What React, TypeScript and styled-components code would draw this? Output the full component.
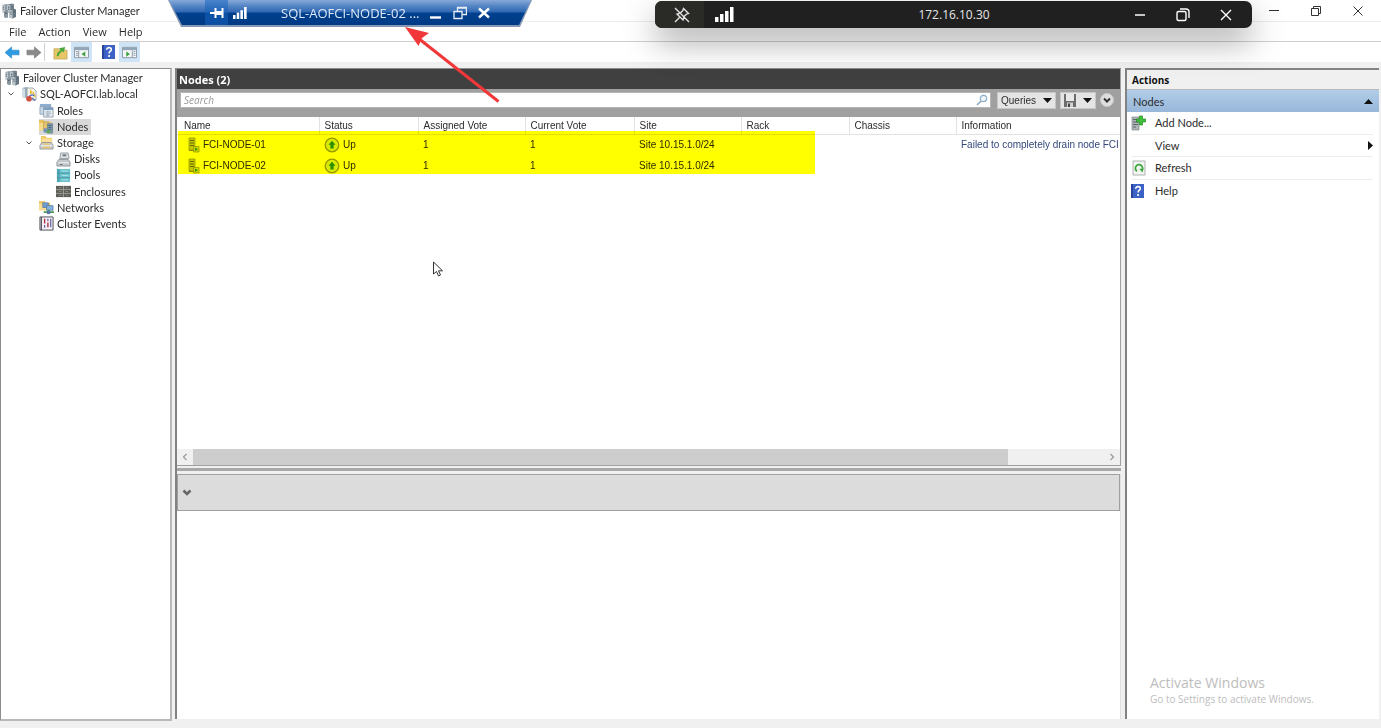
import React from "react";
import styled, { createGlobalStyle, css } from "styled-components";

const ui = `"Open Sans", "Noto Sans", sans-serif`;
const compact = `Lato, "Open Sans", sans-serif`;
const grid = `"Liberation Sans", Arial, sans-serif`;

const GlobalStyle = createGlobalStyle`
  * { box-sizing: border-box; }
  body { margin: 0; background: #f0f0f0; font-family: ${ui}; font-size: 11px; color: #2b2b2b; }
  button { font: inherit; color: inherit; background: none; border: 0; padding: 0; margin: 0; text-align: left; }
  svg { display: block; flex: none; }
`;

const Window = styled.div`
  display: flex;
  flex-direction: column;
  height: 100vh;
  min-width: 960px;
  overflow: hidden;
  position: relative;
`;

const TitleBar = styled.header`
  display: flex;
  align-items: center;
  height: 22px;
  padding: 0 17px 0 1px;
  background: #fff;
  border-bottom: 1px solid #ececec;
`;
const Title = styled.h1`
  flex: 1;
  margin: 0 0 0 3px;
  font: 400 11px/16px ${compact};
`;
const WindowButtons = styled.div`
  display: flex;
  gap: 30px;
`;

const MenuBar = styled.nav`
  display: flex;
  align-items: center;
  gap: 12px;
  height: 20px;
  padding-left: 9px;
  background: #fff;
  border-bottom: 1px solid #cfcfcf;
`;
const MenuItem = styled.button`
  line-height: 16px;
`;

const ToolBar = styled.div`
  display: flex;
  align-items: center;
  height: 20px;
  padding-left: 2px;
  background: #fff;
`;
const ToolButton = styled.button<{ $on?: boolean }>`
  display: flex;
  align-items: center;
  justify-content: center;
  width: 21px;
  height: 20px;
  background: ${(p) => (p.$on ? "#cfe4f7" : "transparent")};
`;
const ToolDivider = styled.span`
  width: 1px;
  height: 18px;
  margin-right: 5px;
  background: #d0d0d0;
`;
const ToolGap = styled.span`
  width: 6px;
`;

const Body = styled.main`
  display: flex;
  flex: 1;
  min-height: 0;
  padding: 6px 2px 0 0;
`;

const TreePane = styled.nav`
  width: 172px;
  border: 1px solid #8c8c8c;
  border-right: 2px solid #b8b8b8;
  border-bottom: 2px solid #b8b8b8;
  background: #fff;
`;
const Tree = styled.ul`
  display: flex;
  flex-direction: column;
  height: 162px;
  margin: 1px 0 0;
  padding: 0;
  list-style: none;
  font-family: ${compact};
`;
const TreeRow = styled.li<{ $level: number }>`
  display: flex;
  flex: 1;
  align-items: center;
  padding-left: ${(p) => [3, 6, 24, 24, 41][p.$level]}px;
`;
const Twisty = styled.span`
  display: flex;
  width: 14px;
`;
const TreeLabel = styled.button<{ $selected?: boolean }>`
  display: flex;
  align-items: center;
  gap: 3px;
  height: 16px;
  padding-right: 3px;
  white-space: nowrap;
  line-height: 16px;
  background: ${(p) => (p.$selected ? "#d9d9d9" : "transparent")};
`;

const Center = styled.section`
  display: flex;
  flex: 1;
  flex-direction: column;
  min-width: 0;
  margin: 0 4px 2px 3px;
  border-left: 2px solid #828282;
  border-top: 1px solid #8c8c8c;
`;
const NodesPanel = styled.section`
  display: flex;
  flex: 396 1 0;
  flex-direction: column;
  min-height: 0;
  background: #fff;
  border-right: 1px solid #a0a0a0;
  border-bottom: 1px solid #a0a0a0;
`;
const PanelTitle = styled.h2`
  margin: 0;
  padding: 2px 2px 0;
  height: 20px;
  background: #404040;
  color: #fff;
  font-size: 11px;
  line-height: 18px;
`;
const SearchStrip = styled.form`
  display: flex;
  align-items: flex-start;
  gap: 4px;
  height: 28px;
  padding: 3px 6px 0 3px;
  background: #a0a0a0;
`;
const SearchBox = styled.label`
  display: flex;
  flex: 1;
  align-items: center;
  height: 16px;
  margin-right: 2px;
  padding-right: 2px;
  background: #fff;
  border: 1px solid #b5b5b5;
`;
const SearchInput = styled.input`
  flex: 1;
  min-width: 0;
  height: 14px;
  padding: 0 3px;
  border: 0;
  outline: 0;
  background: transparent;
  font: italic 10px/14px ${ui};
  &::placeholder { color: #9a9a9a; opacity: 1; }
`;
const StripButton = styled.button<{ $width: number }>`
  display: flex;
  align-items: center;
  justify-content: space-between;
  width: ${(p) => p.$width}px;
  height: 17px;
  padding: 0 3px;
  background: #e4e4e4;
  border: 1px solid #c6c6c6;
  font: 10px/15px ${grid};
`;
const RoundButton = styled.button`
  display: flex;
  margin-top: 1px;
`;

const TableArea = styled.div`
  position: relative;
  flex: 1;
  min-height: 0;
  overflow: hidden;
`;
const Table = styled.table`
  width: 100%;
  table-layout: fixed;
  border-collapse: collapse;
  font: 10px/16px ${grid};
  white-space: nowrap;
`;
const cell = css`
  overflow: hidden;
  text-align: left;
  font-weight: 400;
`;
const Th = styled.th`
  ${cell};
  height: 17px;
  padding: 1px 4px 0 5px;
  border-bottom: 1px solid #e2e2e2;
  border-right: 1px solid #e2e2e2;
  line-height: 15px;
  &:first-child { padding-left: 7px; }
  &:last-child { border-right: 0; }
`;
const Td = styled.td`
  ${cell};
  height: 21px;
  padding: 0 0 0 5px;
  &:first-child { padding-left: 11px; }
  &:last-child { color: #34487c; }
`;
const IconText = styled.span`
  display: flex;
  align-items: center;
  gap: 3px;
`;
const Highlight = styled.div`
  position: absolute;
  top: 14px;
  left: 1px;
  width: 637px;
  height: 43px;
  background: #ffff00;
  mix-blend-mode: multiply;
  pointer-events: none;
`;

const ScrollBar = styled.div`
  display: flex;
  height: 16px;
  background: #f0f0f0;
`;
const ScrollArrow = styled.button`
  display: flex;
  align-items: center;
  justify-content: center;
  width: 16px;
`;
const ScrollTrack = styled.div`
  display: flex;
  flex: 1;
`;
const ScrollThumb = styled.div`
  flex: 17;
  background: #cdcdcd;
`;
const ScrollRest = styled.div`
  flex: 2;
`;

const Splitter = styled.div`
  height: 3px;
  margin: 2px 0 3px;
  background: #a8a8a8;
`;
const DetailPanel = styled.section`
  flex: 245 1 0;
  min-height: 0;
  background: #fff;
  border-right: 1px solid #e0e0e0;
`;
const DetailHeader = styled.div`
  display: flex;
  align-items: center;
  height: 37px;
  padding-left: 4px;
  background: #dcdcdc;
  border: 1px solid #a0a0a0;
`;

const ActionsPane = styled.aside`
  position: relative;
  width: 254px;
  margin-bottom: 2px;
  background: #fff;
  border-left: 2px solid #828282;
  border-top: 2px solid #828282;
`;
const ActionsTitle = styled.h2`
  margin: 0;
  padding-left: 5px;
  height: 20px;
  background: #f0f0f0;
  border-bottom: 1px solid #b8b8b8;
  font-size: 10px;
  line-height: 20px;
  color: #111;
`;
const ActionsGroup = styled.button`
  display: flex;
  align-items: center;
  justify-content: space-between;
  width: 100%;
  height: 22px;
  padding: 0 6px;
  background: linear-gradient(#b1cde9, #98b7d9);
  font-family: ${compact};
`;
const ActionList = styled.ul`
  display: grid;
  grid-auto-rows: 1fr;
  height: 90px;
  margin: 0 6px 0 4px;
  padding: 0;
  list-style: none;
  font-family: ${compact};
`;
const ActionItem = styled.li`
  display: flex;
  border-bottom: 1px solid #ededed;
  &:last-child { border-bottom: 0; }
`;
const ActionButton = styled.button`
  display: flex;
  flex: 1;
  align-items: center;
  gap: 8px;
`;
const ActionText = styled.span`
  flex: 1;
`;
const IconSlot = styled.span`
  width: 16px;
`;
const Watermark = styled.div`
  position: absolute;
  left: 23px;
  bottom: 13px;
  color: #bdbdbd;
  white-space: nowrap;
`;
const WatermarkTitle = styled.p`
  margin: 0;
  font-size: 14px;
  line-height: 18px;
`;
const WatermarkText = styled.p`
  margin: 0;
  font-size: 10px;
  line-height: 14px;
`;

const StatusBar = styled.footer`
  height: 7px;
  background: #f0f0f0;
`;

const SessionTab = styled.div`
  position: absolute;
  top: 0;
  left: 168px;
  width: 364px;
  height: 27px;
  background: #8598b4;
  clip-path: polygon(0 0, 100% 0, 352px 100%, 13px 100%);
`;
const SessionTabFace = styled.div`
  display: flex;
  align-items: center;
  height: 25px;
  padding-left: 37px;
  clip-path: polygon(1px 0, 363px 0, 351px 100%, 14px 100%);
  background: linear-gradient(#86a9da 0, #5585c4 6px, #2f68b2 12px, #00408c 13px, #003a86 100%);
  color: #dfe8f5;
`;
const PinButton = styled.button`
  display: flex;
  align-items: center;
  justify-content: center;
  width: 23px;
  height: 25px;
  margin-right: 5px;
  background: #1663bd88;
`;
const SessionName = styled.span`
  width: 140px;
  margin: 0 8px 0 34px;
  font-size: 13px;
  line-height: 24px;
  white-space: nowrap;
`;
const SessionButtons = styled.div`
  display: flex;
  gap: 10px;
`;

const RemoteBar = styled.div`
  position: absolute;
  top: 1px;
  left: 655px;
  display: flex;
  align-items: center;
  width: 597px;
  height: 27px;
  padding-right: 18px;
  border-radius: 7px;
  overflow: hidden;
  background: #202020;
  color: #e6e6e6;
`;
const RemoteShadow = styled.div`
  position: absolute;
  top: 1px;
  left: 655px;
  width: 597px;
  height: 27px;
  border-radius: 7px;
  box-shadow: 0 14px 32px rgba(0, 0, 0, 0.34);
`;
const UnpinButton = styled.button`
  display: flex;
  align-items: center;
  justify-content: center;
  width: 49px;
  height: 27px;
  padding-left: 4px;
  margin-right: 11px;
  background: #2a2a27;
`;
const RemoteName = styled.span`
  flex: 1;
  padding-left: 42px;
  text-align: center;
  font-size: 12px;
`;
const RemoteButtons = styled.div`
  display: flex;
  gap: 27px;
`;

const Pointer = styled.svg`
  position: absolute;
  left: 432px;
  top: 261px;
`;
const Arrow = styled.svg`
  position: absolute;
  left: 400px;
  top: 22px;
`;

const Icon = ({ s = 15, children }: { s?: number; children: React.ReactNode }) => (
  <svg width={s} height={s} viewBox="0 0 16 16" aria-hidden="true">{children}</svg>
);

const ServersIcon = () => (
  <Icon s={16}>
    <path d="M1 2l5-1v8l-3 1-2-1z" fill="#8d9aa3" />
    <path d="M1 2l3 .7V10L1 9z" fill="#c9d2d8" />
    <path d="M6 1.500l5-1 2 .8v8l-3.500 1L6 9z" fill="#7a8790" />
    <path d="M6 1.500l3.200.8v8L6 9z" fill="#b7c2c9" />
    <path d="M3 8l4-1v7.500L4.800 15 3 14z" fill="#87949d" />
    <path d="M8.500 6.500l4-1 2.500 1V14l-3.500 1.500-3-1z" fill="#66757f" />
    <path d="M8.500 6.500l3 .9v8l-3-1z" fill="#bcc7ce" />
    <path d="M1.800 4l1.400.3M1.800 6l1.400.3M7 4l1.400.3M7 6l1.400.3M9.300 9l1.400.3M9.300 11l1.400.3M12.500 9l1.600-.5M4 10.500l2-.5M10.500 4l1.600-.5" stroke="#4b5a64" />
  </Icon>
);
const ClusterIcon = () => (
  <Icon s={16}>
    <path d="M1 2l4-1 3 1v9l-4 1-3-1z" fill="#9bb0c0" />
    <path d="M1 2l3 1v9l-3-1z" fill="#d2dde5" />
    <path d="M6 2h6l3 3v9H6z" fill="#f6f3e6" stroke="#8a97a5" strokeWidth=".8" />
    <path d="M9 3l3 4-3 1z" fill="#e8bd38" />
    <path d="M12 6l2 5" stroke="#e8bd38" strokeWidth="1.400" />
    <path d="M8 12c0-3 4-4 5-2" stroke="#4f6fbd" strokeWidth="1.400" fill="none" />
    <circle cx="8" cy="12.800" r="2.800" fill="#d2503e" />
    <path d="M11 12l3 2.500" stroke="#5a6fae" strokeWidth="1.500" />
  </Icon>
);
const RolesIcon = () => (
  <Icon>
    <path d="M1 1h12v4H1z" fill="#8eaed0" />
    <path d="M1 4h10v8H1z" fill="#c9d9e8" stroke="#8299b0" strokeWidth=".8" />
    <path d="M5 5h10v10H5z" fill="#e8eef4" stroke="#7d8c9c" strokeWidth=".8" />
    <path d="M5 5h10v2.500H5z" fill="#7d9fc6" />
    <path d="M7 9.500h6M7 11.500h6M7 13.500h4M9.500 8v6" stroke="#93a3b3" strokeWidth=".8" />
  </Icon>
);
const NodesIcon = () => (
  <Icon>
    <path d="M0 1h5l1 2h7v9H0z" fill="#e9c15a" />
    <path d="M0 4h12v8H0z" fill="#f6da8c" />
    <path d="M5 3h5v9H5z" fill="#e6c66f" stroke="#b2924a" strokeWidth=".7" />
    <path d="M9 5h5.500v10H9z" fill="#7f9db5" stroke="#5f7687" strokeWidth=".7" />
    <path d="M10 7h3.500M10 9h3.500M10 11h3.500" stroke="#3f5564" strokeWidth=".8" />
    <path d="M5 10h4v4.500H5z" fill="#6e8fc0" />
    <path d="M8 12h4v3H8z" fill="#5aa84a" />
  </Icon>
);
const StorageIcon = () => (
  <Icon>
    <path d="M2 1h5l1 2h6v7H2z" fill="#f0ca68" />
    <path d="M3 4h11v7H3z" fill="#f9e09a" />
    <path d="M3 8h10l2 3v4H1v-4z" fill="#c9ccd0" stroke="#858a8f" strokeWidth=".8" />
    <path d="M1.500 11.500h13" stroke="#f4f5f6" />
    <path d="M5 9h6v1.500H5zM4 12.500h8V14H4z" fill="#eec45a" />
  </Icon>
);
const DisksIcon = () => (
  <Icon>
    <path d="M5 1h8l1 6H4z" fill="#d9dde0" stroke="#878d93" strokeWidth=".8" />
    <path d="M7 2.500h4v2H7z" fill="#70777d" />
    <path d="M3 8h10l2 3v4H1v-4z" fill="#c3c8cc" stroke="#7f858a" strokeWidth=".8" />
    <path d="M2 11.500h12" stroke="#f1f2f3" />
    <path d="M4 13.300h3" stroke="#666" />
  </Icon>
);
const PoolsIcon = () => (
  <Icon>
    <path d="M1 1h14v14H1z" fill="#6cc3cc" />
    <path d="M1 1h3v14H1z" fill="#4fa6b4" />
    <path d="M1 5.500h14M1 10.300h14" stroke="#4694a2" />
    <path d="M6 3.300h7M6 8h7M6 12.700h7" stroke="#a7e2e6" />
  </Icon>
);
const EnclosuresIcon = () => (
  <Icon>
    <path d="M0 2h16v12H0z" fill="#5d5d58" />
    <path d="M0 6h16M0 10h16M8 2v12" stroke="#a5a59d" strokeWidth=".9" />
    <path d="M3 4h3M10 4h3M3 8h3M10 8h3M3 12h3M10 12h3" stroke="#85857d" />
  </Icon>
);
const NetworksIcon = () => (
  <Icon>
    <path d="M0 1h6l1 2h5v8H0z" fill="#efc968" />
    <path d="M0 4h10v7H0z" fill="#f7dd94" />
    <path d="M4 3h6v5H4z" fill="#6fa0d4" stroke="#4f6f92" strokeWidth=".7" />
    <path d="M8 6h7v5H8z" fill="#84b2e2" stroke="#4f6f92" strokeWidth=".7" />
    <path d="M10 10v5M5 13h11" stroke="#4a9b54" strokeWidth="1.800" />
    <path d="M8.500 11.500h3.500v3.500H8.500z" fill="#5675b4" />
  </Icon>
);
const EventsIcon = () => (
  <Icon>
    <path d="M1 1h14v14H1z" fill="#f4f2f6" stroke="#4a4a55" strokeWidth="1" />
    <path d="M2.500 1v14" stroke="#4a4a55" strokeWidth="1.200" />
    <path d="M6 3v5M9.500 7v5" stroke="#b0304a" strokeWidth="1.500" />
    <path d="M6 9.500v3M9.500 3v2.500M12.500 3v9" stroke="#6a5a9c" strokeWidth="1.300" />
  </Icon>
);
const ServerRowIcon = () => (
  <svg width="12" height="16" viewBox="0 0 12 16" aria-hidden="true">
    <path d="M1 1h6v12H1z" fill="#c4c6c2" stroke="#8d8f8c" strokeWidth=".7" />
    <path d="M2 3.500h4M2 6h4M2 8.500h4" stroke="#6a6c68" />
    <path d="M1 13.500h5" stroke="#8d8f8c" />
    <path d="M5.500 9.500h5.500V15H5.500z" fill="#d3d6c8" stroke="#8d9082" strokeWidth=".7" />
    <path d="M7 10.500l3 1.700-3 1.700z" fill="#2f9a2c" />
  </svg>
);
const UpIcon = () => (
  <Icon s={16}>
    <circle cx="8" cy="8" r="6.800" fill="#d8ead0" stroke="#979797" strokeWidth="1.300" />
    <path d="M8 3.800l3.500 4H9.600v3.700H6.400V7.800H4.500z" fill="#2b8f24" />
  </Icon>
);
const HelpIcon = () => (
  <svg width="13" height="16" viewBox="0 0 13 16" aria-hidden="true">
    <path d="M0 1h13v14H0z" fill="#3b62c4" />
    <path d="M0 1h2v14H0z" fill="#27459a" />
    <path d="M4.700 5.800c0-3 5-2.800 4.600 0-.2 1.400-2.200 1.600-2.200 3.600" stroke="#fff" strokeWidth="1.600" fill="none" />
    <circle cx="7.100" cy="12" r="1.100" fill="#fff" />
  </svg>
);
const AddNodeIcon = () => (
  <Icon s={16}>
    <path d="M1 2h7v13H1z" fill="#aeb4b7" stroke="#83898c" strokeWidth=".7" />
    <path d="M2 4.500h5M2 7h5M2 9.500h5M2 12h3" stroke="#5f6669" />
    <path d="M8.500 1h3v3h3v3h-3v3h-3V7h-3V4h3z" fill="#3fbf3a" stroke="#23881f" strokeWidth=".7" />
  </Icon>
);
const RefreshIcon = () => (
  <Icon s={16}>
    <path d="M2 1h12v14H2z" fill="#f2f5f2" stroke="#a5aaa5" strokeWidth=".9" />
    <path d="M6 11.200a3.600 3.600 0 1 1 4.500-.4" stroke="#3aa63a" strokeWidth="1.700" fill="none" />
    <path d="M8.300 8.800l4.200 0-1 3.800z" fill="#3aa63a" />
  </Icon>
);
const PaneIcon = ({ right }: { right?: boolean }) => (
  <Icon>
    <path d="M.5 2.500h15v11H.5z" fill="#f4f6f8" stroke="#8795a3" />
    <path d="M1 3h14v2.500H1z" fill="#93a6b8" />
    <path d={right ? "M11 6v7" : "M5 6v7"} stroke="#8795a3" />
    <path d={right ? "M12.300 7h2M12.300 9h2M12.300 11h2" : "M2 7h2M2 9h2M2 11h2"} stroke="#8795a3" />
    <path d={right ? "M4.500 7l4 2.700-4 2.700z" : "M12 7L8 9.700l4 2.700z"} fill="#3aa03a" />
  </Icon>
);
const Chevron = ({ color = "#555" }: { color?: string }) => (
  <svg width="8" height="8" viewBox="0 0 8 8" aria-hidden="true">
    <path d="M1.500 2.500L4 5l2.500-2.500" stroke={color} fill="none" />
  </svg>
);
const Caret = () => (
  <svg width="9" height="5" viewBox="0 0 9 5" aria-hidden="true"><path d="M0 0h9L4.500 5z" fill="#111" /></svg>
);
const Signal = ({ w }: { w: number }) => (
  <svg width={w} height={w === 19 ? 15 : 12} viewBox="0 0 19 15" preserveAspectRatio="none" aria-hidden="true">
    <path d="M0 10h3.500v5H0zM5 7h3.500v8H5zM10 4h3.500v11H10zM15 0h3.500v15H15z" fill="#fff" />
  </svg>
);

type TreeEntry = { label: string; level: number; icon: React.ReactNode; open?: boolean; selected?: boolean };
const tree: TreeEntry[] = [
  { label: "Failover Cluster Manager", level: 0, icon: <ServersIcon /> },
  { label: "SQL-AOFCI.lab.local", level: 1, icon: <ClusterIcon />, open: true },
  { label: "Roles", level: 2, icon: <RolesIcon /> },
  { label: "Nodes", level: 2, icon: <NodesIcon />, selected: true },
  { label: "Storage", level: 3, icon: <StorageIcon />, open: true },
  { label: "Disks", level: 4, icon: <DisksIcon /> },
  { label: "Pools", level: 4, icon: <PoolsIcon /> },
  { label: "Enclosures", level: 4, icon: <EnclosuresIcon /> },
  { label: "Networks", level: 2, icon: <NetworksIcon /> },
  { label: "Cluster Events", level: 2, icon: <EventsIcon /> },
];

const columns: { name: string; width?: number }[] = [
  { name: "Name", width: 142 },
  { name: "Status", width: 99 },
  { name: "Assigned Vote", width: 107 },
  { name: "Current Vote", width: 109 },
  { name: "Site", width: 107 },
  { name: "Rack", width: 108 },
  { name: "Chassis", width: 107 },
  { name: "Information" },
];
const nodes = [
  { name: "FCI-NODE-01", info: "Failed to completely drain node FCI" },
  { name: "FCI-NODE-02", info: "" },
];

const Col = styled.col<{ $width?: number }>`
  width: ${(p) => (p.$width ? `${p.$width}px` : "auto")};
`;

export default function App() {
  return (
    <Window>
      <GlobalStyle />
      <TitleBar>
        <ServersIcon />
        <Title>Failover Cluster Manager</Title>
        <WindowButtons>
          <button aria-label="Minimize">
            <svg width="12" height="12" viewBox="0 0 12 12"><path d="M1 5.500h10" stroke="#333" /></svg>
          </button>
          <button aria-label="Restore">
            <svg width="12" height="12" viewBox="0 0 12 12"><path d="M1.500 3.500h7v7h-7zM3.500 3.500v-2h7v7h-2" fill="none" stroke="#333" /></svg>
          </button>
          <button aria-label="Close">
            <svg width="12" height="12" viewBox="0 0 12 12"><path d="M1.500 1.500l9 9M10.500 1.500l-9 9" stroke="#333" /></svg>
          </button>
        </WindowButtons>
      </TitleBar>
      <MenuBar aria-label="Menu">
        {["File", "Action", "View", "Help"].map((m) => <MenuItem key={m}>{m}</MenuItem>)}
      </MenuBar>
      <ToolBar>
        <ToolButton aria-label="Back">
          <Icon><path d="M0 8l7-6v3.500h8v5H7V14z" fill="#2f9be0" stroke="#2382c0" strokeWidth=".6" /></Icon>
        </ToolButton>
        <ToolButton aria-label="Forward">
          <Icon><path d="M16 8L9 2v3.500H1v5h8V14z" fill="#8a8a8a" stroke="#707070" strokeWidth=".6" /></Icon>
        </ToolButton>
        <ToolDivider />
        <ToolButton aria-label="Up one level">
          <Icon><path d="M1 4h5l1 1.500h8V15H1z" fill="#e7c765" stroke="#b89c4c" strokeWidth=".7" /><path d="M4 12c0-4 2-5.500 4-6L6.500 3.500 13 2l-1.500 6-1.500-1.300C8 8 6.500 9 6 12z" fill="#4aa83c" /></Icon>
        </ToolButton>
        <ToolButton $on aria-label="Show console tree"><PaneIcon /></ToolButton>
        <ToolGap />
        <ToolButton aria-label="Help"><HelpIcon /></ToolButton>
        <ToolButton $on aria-label="Show action pane"><PaneIcon right /></ToolButton>
      </ToolBar>

      <Body>
        <TreePane aria-label="Console tree">
          <Tree>
            {tree.map((t) => (
              <TreeRow key={t.label} $level={t.level}>
                {t.level > 0 && <Twisty>{t.open && <Chevron />}</Twisty>}
                <TreeLabel $selected={t.selected}>{t.icon}{t.label}</TreeLabel>
              </TreeRow>
            ))}
          </Tree>
        </TreePane>

        <Center>
          <NodesPanel>
            <PanelTitle>Nodes (2)</PanelTitle>
            <SearchStrip>
              <SearchBox>
                <SearchInput type="text" placeholder="Search" aria-label="Search" />
                <svg width="12" height="12" viewBox="0 0 12 12"><circle cx="7.500" cy="4.500" r="3.200" fill="#eef5fb" stroke="#8fb0cc" strokeWidth="1.200" /><path d="M5 7l-4 4" stroke="#8fa9bd" strokeWidth="1.600" /></svg>
              </SearchBox>
              <StripButton type="button" $width={59}>Queries <Caret /></StripButton>
              <StripButton type="button" $width={36} aria-label="Save query">
                <svg width="12" height="13" viewBox="0 0 12 13"><path d="M0 0h12v13H0z" fill="#6c6c6c" /><path d="M2 0h8v7H2z" fill="#e8e8e8" /><path d="M3 8.500h6V13H3z" fill="#cfcfcf" /><path d="M4 9.500h2V13H4z" fill="#444" /></svg>
                <Caret />
              </StripButton>
              <RoundButton type="button" aria-label="Expand">
                <svg width="14" height="14" viewBox="0 0 14 14"><circle cx="7" cy="7" r="6.500" fill="#dedede" stroke="#c8c8c8" /><path d="M4 5.500l3 3 3-3" fill="none" stroke="#333" strokeWidth="2" /></svg>
              </RoundButton>
            </SearchStrip>
            <TableArea>
              <Table>
                <colgroup>{columns.map((c) => <Col key={c.name} $width={c.width} />)}</colgroup>
                <thead>
                  <tr>{columns.map((c) => <Th key={c.name} scope="col">{c.name}</Th>)}</tr>
                </thead>
                <tbody>
                  {nodes.map((n) => (
                    <tr key={n.name}>
                      <Td><IconText><ServerRowIcon />{n.name}</IconText></Td>
                      <Td><IconText><UpIcon />Up</IconText></Td>
                      <Td>1</Td>
                      <Td>1</Td>
                      <Td>Site 10.15.1.0/24</Td>
                      <Td />
                      <Td />
                      <Td>{n.info}</Td>
                    </tr>
                  ))}
                </tbody>
              </Table>
              <Highlight />
            </TableArea>
            <ScrollBar>
              <ScrollArrow aria-label="Scroll left">
                <svg width="6" height="8" viewBox="0 0 6 8"><path d="M4.500 1l-3 3 3 3" fill="none" stroke="#9a9a9a" strokeWidth="1.200" /></svg>
              </ScrollArrow>
              <ScrollTrack><ScrollThumb /><ScrollRest /></ScrollTrack>
              <ScrollArrow aria-label="Scroll right">
                <svg width="6" height="8" viewBox="0 0 6 8"><path d="M1.500 1l3 3-3 3" fill="none" stroke="#9a9a9a" strokeWidth="1.200" /></svg>
              </ScrollArrow>
            </ScrollBar>
          </NodesPanel>
          <Splitter />
          <DetailPanel>
            <DetailHeader>
              <button aria-label="Expand details">
                <svg width="10" height="8" viewBox="0 0 10 8"><path d="M1.500 1.500L5 5l3.500-3.500" fill="none" stroke="#666" strokeWidth="2.600" /></svg>
              </button>
            </DetailHeader>
          </DetailPanel>
        </Center>

        <ActionsPane>
          <ActionsTitle>Actions</ActionsTitle>
          <ActionsGroup>
            Nodes
            <svg width="9" height="5" viewBox="0 0 9 5"><path d="M0 5h9L4.500 0z" fill="#111" /></svg>
          </ActionsGroup>
          <ActionList>
            <ActionItem><ActionButton><IconSlot><AddNodeIcon /></IconSlot><ActionText>Add Node...</ActionText></ActionButton></ActionItem>
            <ActionItem>
              <ActionButton>
                <IconSlot /><ActionText>View</ActionText>
                <svg width="5" height="9" viewBox="0 0 5 9"><path d="M0 0v9l5-4.500z" fill="#111" /></svg>
              </ActionButton>
            </ActionItem>
            <ActionItem><ActionButton><IconSlot><RefreshIcon /></IconSlot><ActionText>Refresh</ActionText></ActionButton></ActionItem>
            <ActionItem><ActionButton><IconSlot><HelpIcon /></IconSlot><ActionText>Help</ActionText></ActionButton></ActionItem>
          </ActionList>
          <Watermark>
            <WatermarkTitle>Activate Windows</WatermarkTitle>
            <WatermarkText>Go to Settings to activate Windows.</WatermarkText>
          </Watermark>
        </ActionsPane>
      </Body>
      <StatusBar />

      <SessionTab>
        <SessionTabFace>
          <PinButton aria-label="Pin">
            <svg width="14" height="12" viewBox="0 0 14 12"><path d="M0 6h5M5.500 1v10M12.500 1v10" stroke="#fff" strokeWidth="2" /><path d="M6 4h6v4H6z" fill="#fff" /></svg>
          </PinButton>
          <Signal w={14} />
          <SessionName>SQL-AOFCI-NODE-02 ...</SessionName>
          <SessionButtons>
            <button aria-label="Minimize session"><svg width="14" height="14" viewBox="0 0 14 14"><path d="M1 11.500h11" stroke="#fff" strokeWidth="2.400" /></svg></button>
            <button aria-label="Restore session"><svg width="14" height="14" viewBox="0 0 14 14"><path d="M1 5.500h8v7H1zM4.500 5V1.500h9v7H9.500M1 5.500h8M4.500 2h9" fill="none" stroke="#e8eef8" strokeWidth="1.300" /></svg></button>
            <button aria-label="Close session"><svg width="14" height="14" viewBox="0 0 14 14"><path d="M2 2.500l10 9M12 2.500l-10 9" stroke="#fff" strokeWidth="2.400" /></svg></button>
          </SessionButtons>
        </SessionTabFace>
      </SessionTab>

      <RemoteShadow />
      <RemoteBar>
        <UnpinButton aria-label="Unpin">
          <svg width="16" height="16" viewBox="0 0 16 16" fill="none" stroke="#e2e2e2" strokeWidth="1.400"><path d="M9.500 1.500l5 5-2 .6-2.600 2.600-.9 3.300-6-6 3.300-.9 2.600-2.600zM5.500 10.500L1 15M1 1l14 14" /></svg>
        </UnpinButton>
        <Signal w={19} />
        <RemoteName>172.16.10.30</RemoteName>
        <RemoteButtons>
          <button aria-label="Minimize remote"><svg width="16" height="14" viewBox="0 0 16 14"><path d="M3 7h10" stroke="#fff" strokeWidth="1.400" /></svg></button>
          <button aria-label="Restore remote"><svg width="16" height="14" viewBox="0 0 16 14" fill="none" stroke="#fff" strokeWidth="1.400"><rect x="2" y="3.500" width="9" height="9" rx="1.500" /><path d="M5 1h6a3 3 0 0 1 3 3v6" /></svg></button>
          <button aria-label="Close remote"><svg width="16" height="14" viewBox="0 0 16 14"><path d="M3 2l10 10M13 2L3 12" stroke="#fff" strokeWidth="1.400" /></svg></button>
        </RemoteButtons>
      </RemoteBar>

      <Arrow width="104" height="84" viewBox="0 0 104 84" aria-hidden="true">
        <path d="M98.500 79.500L18 16" stroke="#f0383a" strokeWidth="3" />
        <path d="M5 5l24 6-7 5-3.500 8z" fill="#f0383a" />
      </Arrow>
      <Pointer width="12" height="17" viewBox="0 0 12 17" aria-hidden="true">
        <path d="M1.500 1v12l3-2.500 2 4.500 2-1-2-4.200h4z" fill="#fff" stroke="#333" />
      </Pointer>
    </Window>
  );
}
